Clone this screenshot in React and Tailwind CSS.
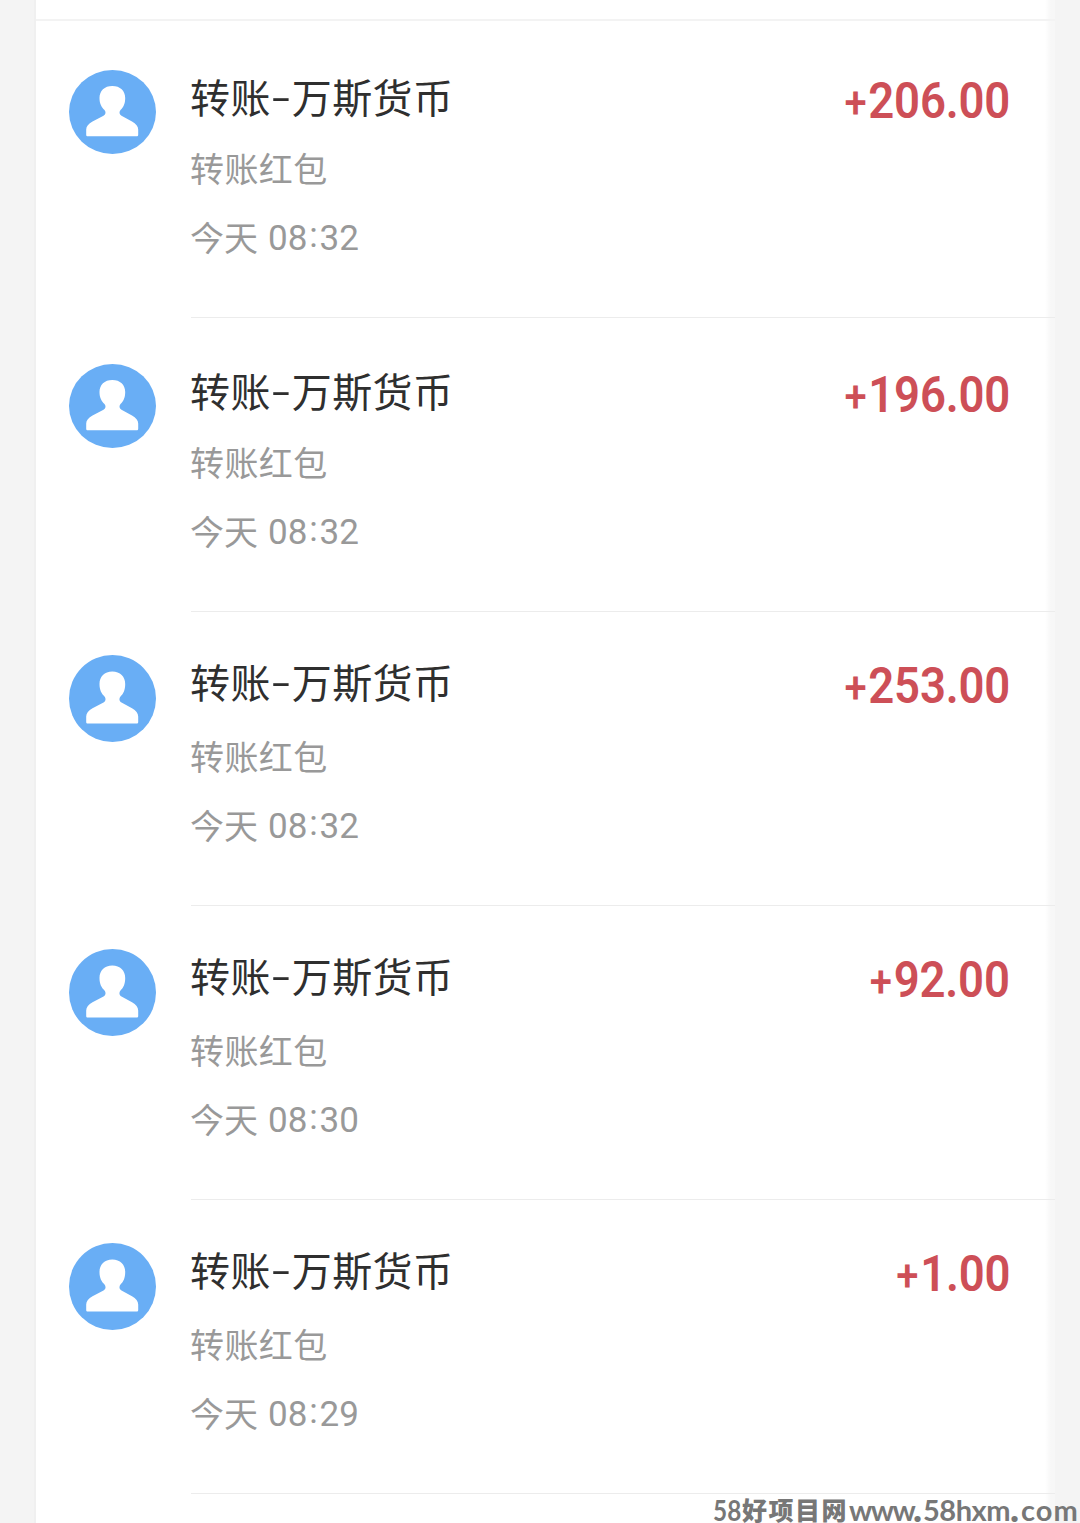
const records = [
  { id: 1, amount: "206.00", time: ["08", "32"] },
  { id: 2, amount: "196.00", time: ["08", "32"] },
  { id: 3, amount: "253.00", time: ["08", "32"], tall: true },
  { id: 4, amount: "92.00", time: ["08", "30"], tall: true },
  { id: 5, amount: "1.00", time: ["08", "29"], tall: true },
];

const Avatar = ({ tall }) => (
  <svg
    viewBox="0 0 87 87"
    preserveAspectRatio="none"
    className={tall ? "w-[87px] h-[87px] shrink-0" : "w-[87px] h-[84px] mt-[3px] shrink-0"}
  >
    <ellipse cx="43.5" cy="43.5" rx="43.5" ry="43.5" fill="#69aef5" />
    <path
      d="M43.3 16.5C35.5 16.5 30.5 21.5 30.5 29C30.5 35 32.5 38.500 35.500 41.500C37 43.500 37 46 34.500 47.500L23.500 53.300C19.500 55.500 17.200 58.500 17.200 61.500V67C17.200 68 17.800 68.600 18.800 68.600H67.600C68.600 68.600 69.200 68 69.200 67V61.500C69.200 58.500 67 55.500 63 53.300L52.500 47.500C50 46 50 43.500 51.500 41.500C54.500 38.500 56.200 35 56.200 29C56.200 21.500 51.200 16.500 43.300 16.500Z"
      fill="#fff"
    />
  </svg>
);

const Record = ({ record }) => (
  <li className="flex h-[294px] pl-[33px]">
    <div className="pt-[43px]">
      <Avatar tall={record.tall} />
    </div>
    <div className="ml-[35px] flex-1 border-b border-[#ececec]">
      <div className={record.tall ? "flex justify-between h-[114px] pt-10" : "flex justify-between h-[114px] pt-[43px]"}>
        <h2 className="-ml-px flex h-[58px] items-center text-[40px] leading-[58px] tracking-[0.4px] text-[#2f2f2f]">
          转账
          <span className="mb-1 w-[21px] text-center">
            <span className="inline-block scale-x-150">-</span>
          </span>
          万斯货币
        </h2>
        <p className="mr-[45px] mt-[5px] flex origin-right scale-x-[0.91] font-['Roboto'] text-[50px] font-semibold leading-[58px] tracking-[-0.2px] text-[#cd4f57]">
          <span className="mr-[2px] pt-[2px] text-[44px] font-medium">+</span>
          {record.amount}
        </p>
      </div>
      <p className="-ml-px h-[60px] text-[34px] leading-[60px] tracking-[0.4px] text-[#999]">转账红包</p>
      <p className="-ml-px mt-[9px] flex h-[60px] text-[34px] leading-[60px] text-[#999]">
        今天
        <span className="ml-[10px] mt-0.5 flex font-['Roboto'] text-[35px] tracking-[0.1px]">
          {record.time[0]}
          <span className="-mt-[3px] w-[12px] text-center">:</span>
          {record.time[1]}
        </span>
      </p>
    </div>
  </li>
);

const Watermark = () => (
  <div className="absolute bottom-0 right-0 flex h-[26px] w-[367px] items-center whitespace-nowrap font-['Lato'] text-[29px] font-bold leading-[26px] text-[#777]">
    <span className="w-[29px] origin-left scale-x-[0.84]">58</span>
    <span className="mb-0.5 w-[107px] font-['Noto_Sans_CJK_SC'] text-[25px] font-black leading-6 tracking-[1.5px]">好项目网</span>
    <span className="w-[64px] tracking-[-1.5px]">www</span>
    <span className="-mt-1.5 w-[10px] text-[38px] font-black">.</span>
    <span className="w-[87px] tracking-[-0.5px]">58hxm</span>
    <span className="-mt-1.5 w-[11px] text-[38px] font-black">.</span>
    <span className="w-[59px] tracking-[1px]">com</span>
  </div>
);

const App = () => {
  return (
    <main className="relative h-[1523px] w-[1080px] overflow-hidden bg-[#f4f4f4] pl-[34px] font-['Noto_Sans_CJK_SC',sans-serif]">
      <div className="h-full w-[1021px] border-l-2 border-[#f0f0f0] bg-linear-to-r from-white from-[1009px] to-[#f7f7f7] to-[1015px]">
        <div className="h-6 pt-[19px]">
          <div className="h-[2px] bg-[#f3f3f3]" />
        </div>
        <ul>
          {records.map((record) => (
            <Record key={record.id} record={record} />
          ))}
        </ul>
      </div>
      <Watermark />
    </main>
  );
};

export default App;
